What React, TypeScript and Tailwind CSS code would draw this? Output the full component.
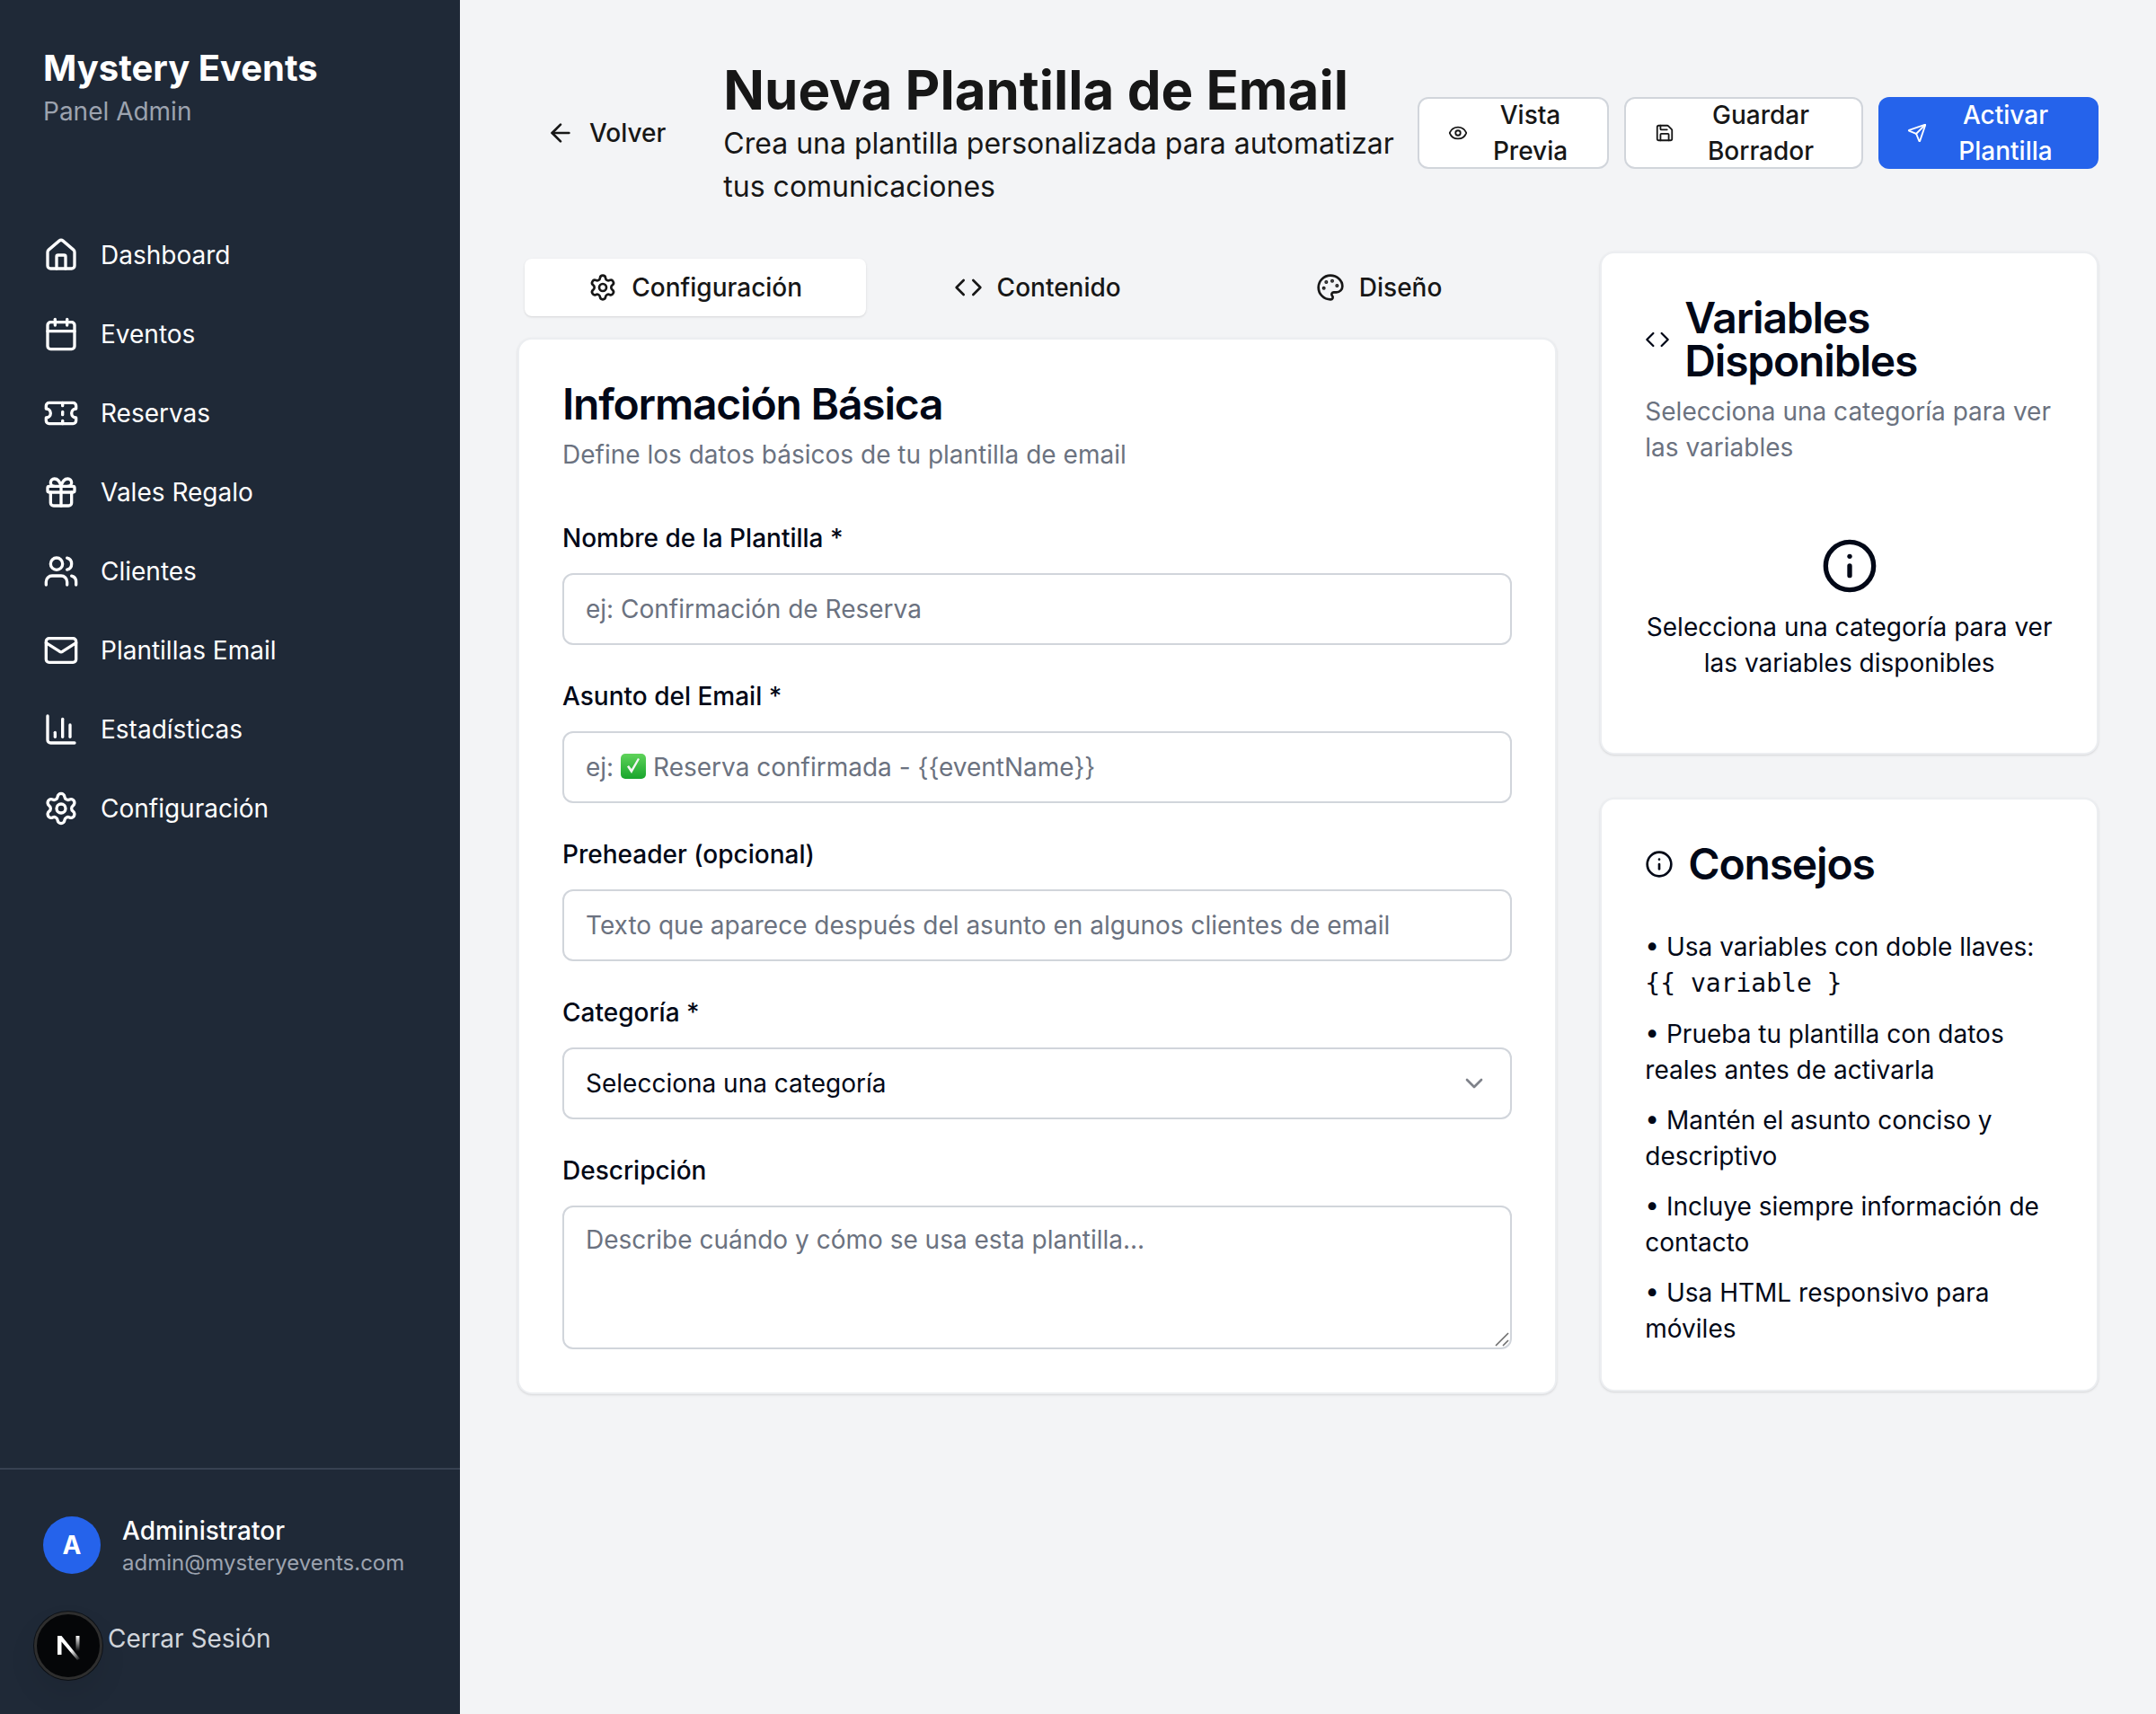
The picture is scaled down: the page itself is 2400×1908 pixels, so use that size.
import { ArrowLeft, Calendar, ChartColumn, ChevronDown, Code, Eye, Gift, House, Info, LogOut, Mail, Palette, Save, Send, Settings, Ticket, Users } from 'lucide-react';

const navItems = [
  { label: 'Dashboard', icon: House },
  { label: 'Eventos', icon: Calendar },
  { label: 'Reservas', icon: Ticket },
  { label: 'Vales Regalo', icon: Gift },
  { label: 'Clientes', icon: Users },
  { label: 'Plantillas Email', icon: Mail },
  { label: 'Estadísticas', icon: ChartColumn },
  { label: 'Configuración', icon: Settings },
];

const tabs = [
  { label: 'Configuración', icon: Settings, active: true },
  { label: 'Contenido', icon: Code, active: false },
  { label: 'Diseño', icon: Palette, active: false },
];

const tips = [
  'Prueba tu plantilla con datos reales antes de activarla',
  'Mantén el asunto conciso y descriptivo',
  'Incluye siempre información de contacto',
  'Usa HTML responsivo para móviles',
];

const inputClass =
  'block w-full h-20 px-6 rounded-xl border-2 border-[#d1d5db] bg-white text-[28px] leading-10 text-[#020817] placeholder:text-[#6b7280] outline-none';

const NextBadge = () => (
  <div className="absolute left-[38px] top-[1794px] w-[76px] h-[76px] rounded-full bg-[#050608] border-[3px] border-[#2e2e2e] shadow-[0_0_0_1px_rgba(0,0,0,0.6),0_16px_32px_rgba(0,0,0,0.08)] flex items-center justify-center">
    <svg viewBox="0 0 25 27" className="w-[25px] h-[27px] mt-[5px]">
      <defs>
        <linearGradient id="nFade" x1="0" y1="0" x2="1" y2="1">
          <stop offset="0.6" stopColor="#fff" />
          <stop offset="1" stopColor="#fff" stopOpacity="0" />
        </linearGradient>
        <linearGradient id="nBar" x1="0" y1="0" x2="0" y2="1">
          <stop offset="0" stopColor="#fff" />
          <stop offset="0.9" stopColor="#fff" stopOpacity="0" />
        </linearGradient>
      </defs>
      <path d="M0 0h4.5L25 25.5 22 27 4.5 6.5V21H0Z" fill="url(#nFade)" />
      <rect x="20.5" y="0" width="4" height="19" fill="url(#nBar)" />
    </svg>
  </div>
);

const CheckEmoji = () => (
  <svg viewBox="0 0 28 28" className="w-7 h-7 shrink-0 -mt-0.5">
    <defs>
      <linearGradient id="checkGreen" x1="0" y1="0" x2="0" y2="1">
        <stop offset="0" stopColor="#5fd35a" />
        <stop offset="1" stopColor="#18a52c" />
      </linearGradient>
    </defs>
    <rect width="28" height="28" rx="5" fill="url(#checkGreen)" />
    <path d="M7 14.5l5 7.5 9-16-2-1-7 12-3-4Z" fill="#f4f6f5" />
  </svg>
);

const Sidebar = () => (
  <aside className="w-[512px] shrink-0 h-[1908px] bg-[#1f2937] flex flex-col text-white">
    <div className="p-12">
      <h1 className="text-[40px] leading-14 font-bold">Mystery Events</h1>
      <p className="text-[28px] leading-10 text-[#9ca3af]">Panel Admin</p>
    </div>
    <nav className="px-12 pt-12">
      {navItems.map((item) => (
        <a key={item.label} className="flex items-center gap-6 h-22 text-[28px] leading-10 text-white">
          <item.icon className="w-10 h-10 shrink-0" />
          {item.label}
        </a>
      ))}
    </nav>
    <div className="mt-auto border-t-2 border-[#374151] px-12 pt-12 pb-11">
      <div className="flex items-center gap-6">
        <div className="w-16 h-16 rounded-full bg-[#2563eb] flex items-center justify-center text-[28px] font-bold">A</div>
        <div>
          <p className="text-[28px] leading-10 font-medium">Administrator</p>
          <p className="text-2xl leading-8 text-[#9ca3af]">admin@mysteryevents.com</p>
        </div>
      </div>
      <button className="mt-7 h-20 w-full flex items-center gap-6 px-4 text-[28px] leading-10 text-[#d1d5db]">
        <LogOut className="w-8 h-8" />
        Cerrar Sesión
      </button>
    </div>
  </aside>
);

const Header = () => (
  <header className="flex items-center gap-4 mb-12 text-[#171717]">
    <div className="flex-1 min-w-0 flex items-center gap-8">
      <button className="h-20 px-8 flex items-center gap-4 text-[28px] leading-10 font-medium shrink-0">
        <ArrowLeft className="w-8 h-8" />
        Volver
      </button>
      <div>
        <h2 className="text-[60px] leading-18 font-bold">Nueva Plantilla de Email</h2>
        <p className="text-[32px] leading-12">Crea una plantilla personalizada para automatizar tus comunicaciones</p>
      </div>
    </div>
    <div className="flex items-center gap-[17px] shrink-0">
      <button className="w-[213px] h-20 px-8 flex items-center gap-4 rounded-xl border-2 border-[#d1d5db] bg-white text-[28px] leading-10 font-medium">
        <Eye className="w-[22px] h-[22px] shrink-0" />
        <span className="flex-1 text-center">Vista Previa</span>
      </button>
      <button className="w-[266px] h-20 px-8 flex items-center gap-4 rounded-xl border-2 border-[#d1d5db] bg-white text-[28px] leading-10 font-medium">
        <Save className="w-[22px] h-[22px] shrink-0" />
        <span className="flex-1 text-center">Guardar Borrador</span>
      </button>
      <button className="w-[245px] h-20 px-8 flex items-center gap-4 rounded-xl bg-[#2563eb] text-white text-[28px] leading-10 font-medium">
        <Send className="w-[22px] h-[22px] shrink-0" />
        <span className="flex-1 text-center">Activar Plantilla</span>
      </button>
    </div>
  </header>
);

const Field = ({ label, children }: { label: string; children: React.ReactNode }) => (
  <div>
    <label className="block mb-[19px] text-[28px] leading-10 font-medium text-[#020817]">{label}</label>
    {children}
  </div>
);

const BasicInfo = () => (
  <section className="mt-4 rounded-2xl border-2 border-[#eceef1] bg-white shadow-sm p-12">
    <h3 className="text-5xl leading-12 font-semibold tracking-tight text-[#020817]">Información Básica</h3>
    <p className="mt-3 text-[28px] leading-10 text-[#6b7280]">Define los datos básicos de tu plantilla de email</p>
    <div className="mt-12 pt-[5px] flex flex-col gap-[37px]">
      <Field label="Nombre de la Plantilla *">
        <input className={inputClass} placeholder="ej: Confirmación de Reserva" />
      </Field>
      <Field label="Asunto del Email *">
        <div className="relative">
          <input className={inputClass} />
          {/* placeholder with the emoji drawn over the empty input */}
          <div className="absolute inset-y-0 left-[26px] flex items-center whitespace-pre text-[28px] text-[#6b7280] pointer-events-none">
            <span>ej: </span>
            <CheckEmoji />
            <span className="ml-2">Reserva confirmada - {'{{eventName}}'}</span>
          </div>
        </div>
      </Field>
      <Field label="Preheader (opcional)">
        <input className={inputClass} placeholder="Texto que aparece después del asunto en algunos clientes de email" />
      </Field>
      <Field label="Categoría *">
        <div className={`${inputClass} flex items-center justify-between`}>
          <span>Selecciona una categoría</span>
          <ChevronDown className="w-8 h-8 opacity-50" />
        </div>
      </Field>
      <Field label="Descripción">
        <div className="relative">
          <textarea
            className="block w-full h-40 px-6 py-4 rounded-xl border-2 border-[#d1d5db] bg-white text-[28px] leading-10 text-[#020817] placeholder:text-[#6b7280] outline-none resize-none"
            placeholder="Describe cuándo y cómo se usa esta plantilla..."
          />
          <svg viewBox="0 0 16 16" className="absolute right-[3px] bottom-[3px] w-4 h-4" stroke="#6b6b6b" strokeWidth="1.6">
            <path d="M1 15 15 1" />
            <path d="M9 15 15 9" />
          </svg>
        </div>
      </Field>
    </div>
  </section>
);

const SideCards = () => (
  <div className="flex flex-col gap-12 text-[#020817]">
    <section className="rounded-2xl border-2 border-[#eceef1] bg-white shadow-sm p-12">
      <div className="flex items-center gap-4">
        <Code className="w-7 h-7 shrink-0" />
        <h3 className="text-5xl leading-12 font-semibold tracking-tight">Variables Disponibles</h3>
      </div>
      <p className="mt-3 text-[28px] leading-10 text-[#6b7280]">Selecciona una categoría para ver las variables</p>
      <div className="mt-12 py-8 flex flex-col items-center text-center">
        <Info className="w-16 h-16 mb-4" />
        <p className="text-[28px] leading-10">Selecciona una categoría para ver las variables disponibles</p>
      </div>
    </section>
    <section className="rounded-2xl border-2 border-[#eceef1] bg-white shadow-sm p-12">
      <div className="flex items-center gap-4">
        <Info className="w-8 h-8 shrink-0" />
        <h3 className="text-5xl leading-12 font-semibold tracking-tight">Consejos</h3>
      </div>
      <div className="mt-12 flex flex-col gap-4 text-[28px] leading-10">
        <p>
          • Usa variables con doble llaves: <code className="font-['DejaVu_Sans_Mono',monospace]">{'{{ variable }'}</code>
        </p>
        {tips.map((tip) => (
          <p key={tip}>• {tip}</p>
        ))}
      </div>
    </section>
  </div>
);

export default function App() {
  return (
    <div className="relative flex min-h-screen bg-[#f3f4f6] font-['Inter',sans-serif]">
      <Sidebar />
      <main className="flex-1 min-w-0 p-16">
        <Header />
        <div className="grid grid-cols-3 gap-12">
          <div className="col-span-2">
            <div className="grid grid-cols-3 h-20 p-2 rounded-xl">
              {tabs.map((tab) => (
                <button
                  key={tab.label}
                  className={`flex items-center justify-center gap-4 rounded-lg text-[28px] leading-10 font-medium text-[#171717] ${tab.active ? 'bg-white shadow-sm' : ''}`}
                >
                  <tab.icon className="w-8 h-8" />
                  {tab.label}
                </button>
              ))}
            </div>
            <BasicInfo />
          </div>
          <SideCards />
        </div>
      </main>
      <NextBadge />
    </div>
  );
}
